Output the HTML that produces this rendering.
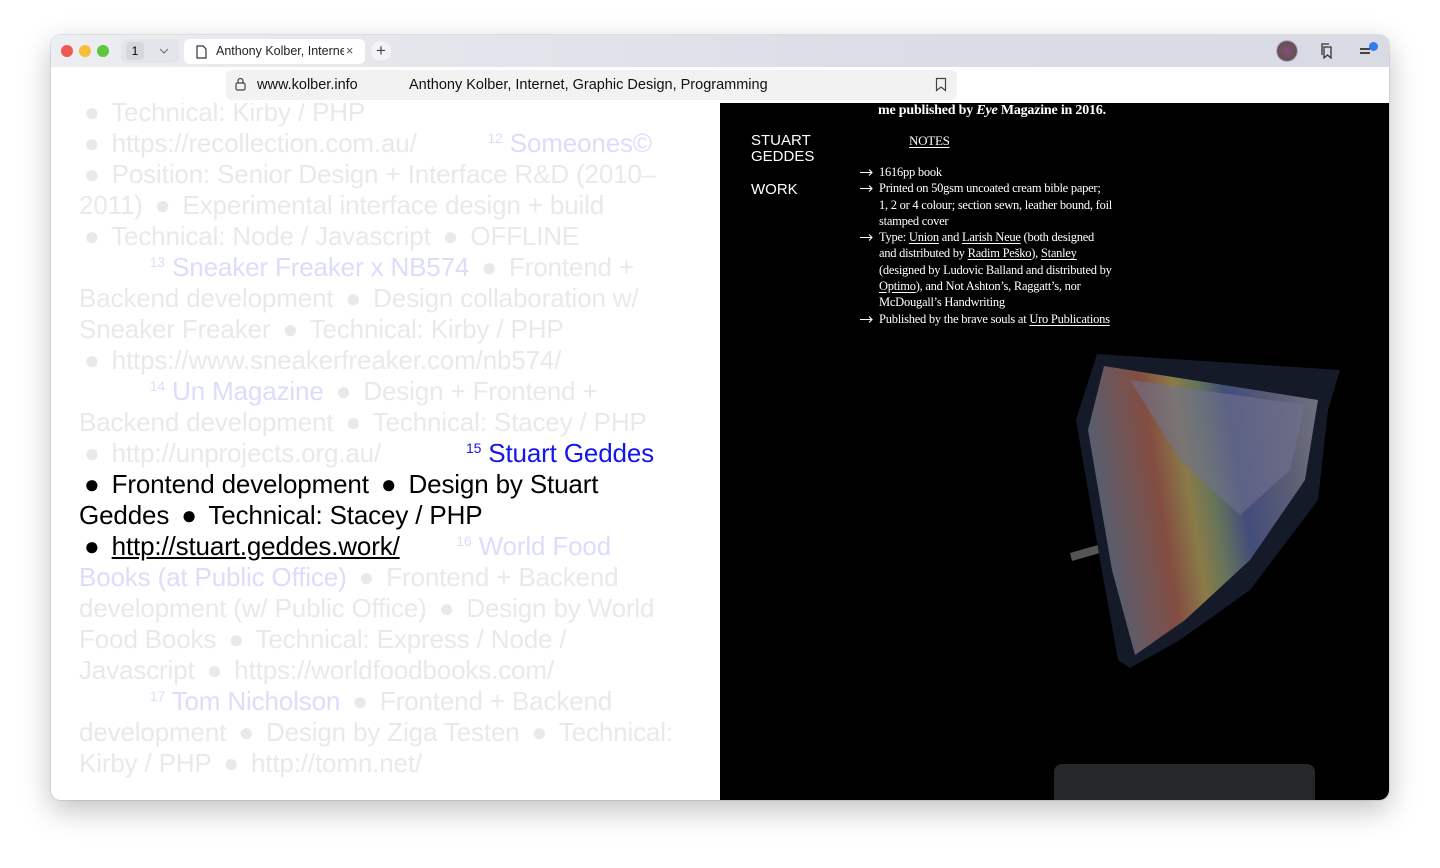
<!DOCTYPE html>
<html><head><meta charset="utf-8"><style>
*{margin:0;padding:0;box-sizing:border-box}
body{width:1440px;height:868px;background:#fff;position:relative;overflow:hidden;font-family:"Liberation Sans",Arial,sans-serif}
.win{position:absolute;left:51px;top:35px;width:1338px;height:765px;border-radius:10px;overflow:hidden;box-shadow:0 10px 30px rgba(0,0,0,.25),0 0 0 1px rgba(0,0,0,.08)}
.tabbar{position:absolute;left:0;top:0;width:100%;height:32px;background:linear-gradient(90deg,#eceef2,#dcdde6 60%,#d8dae4)}
.addr{position:absolute;left:0;top:32px;width:100%;height:36px;background:#fff}
.dot{position:absolute;top:10px;width:12px;height:12px;border-radius:50%}
.content{position:absolute;left:0;top:68px;width:100%;height:697px;overflow:hidden}
.left{position:absolute;left:0;top:0;width:669px;height:697px;background:#fff;overflow:hidden}
.right{position:absolute;left:669px;top:0;width:669px;height:697px;background:#000;overflow:hidden}
.ln{position:absolute;left:28px;font-size:26px;line-height:31px;height:31px;white-space:pre;color:#e9e9e9;letter-spacing:-0.15px}
.d{font-style:normal;margin:0 5px}
.f{margin-left:5px}
.b{color:#dcdcfb}
.k{color:#000}
.bl{color:#1515ee}
sup{font-size:14px;line-height:0;position:relative;top:-9px;vertical-align:baseline}
.serif{font-family:"Liberation Serif",serif;color:#fff;font-size:12.5px;line-height:16.3px;position:absolute;letter-spacing:-0.25px}
.notes{white-space:nowrap}
.serif u{text-decoration:underline;text-underline-offset:2px}
.it{padding-left:19px;position:relative}
.it svg{position:absolute;left:0;top:5px}
.sans{position:absolute;color:#fff;font-size:15px;line-height:16px}
</style></head><body>
<div class="win">
 <div class="tabbar">
  <div class="dot" style="left:10px;background:#ee5a52"></div>
  <div class="dot" style="left:28px;background:#f4bd3a"></div>
  <div class="dot" style="left:46px;background:#5fc73f"></div>
  <div style="position:absolute;left:70px;top:4px;width:58px;height:24px;border-radius:6px;background:#e4e5ea"></div>
  <div style="position:absolute;left:75px;top:7px;width:18px;height:18px;border-radius:4px;background:#d6d7dc;font-size:12px;text-align:center;line-height:18px">1</div>
  <svg style="position:absolute;left:108px;top:13px" width="10" height="6" viewBox="0 0 10 6"><path d="M1 1l4 4 4-4" fill="none" stroke="#777" stroke-width="1.2"/></svg>
  <div style="position:absolute;left:133px;top:4px;width:181px;height:25px;border-radius:6px;background:#fff;font-size:12.5px;line-height:25px;padding-left:32px;color:#222;white-space:nowrap;overflow:hidden">Anthony Kolber, Interne<span style="color:#aaa">t</span><span style="position:absolute;left:160px;top:0;width:21px;background:#fff;color:#555;padding-left:2px">×</span>
   <svg style="position:absolute;left:12px;top:6px" width="11" height="14" viewBox="0 0 11 14"><path d="M1 1h6l3 3v9H1z" fill="none" stroke="#333" stroke-width="1.2"/></svg></div>
  <div style="position:absolute;left:320px;top:6px;width:20px;height:20px;border-radius:50%;background:#f3f3f6;text-align:center;font-size:17px;line-height:19px;color:#444">+</div>
  <div style="position:absolute;left:1226px;top:6px;width:20px;height:20px;border-radius:50%;background:radial-gradient(circle,#8a4a7a,#4a5a3a);box-shadow:0 0 0 1px #c9a0e0"></div>
  <svg style="position:absolute;left:1269px;top:8px" width="14" height="16" viewBox="0 0 14 16"><path d="M4 4h7v11l-3.5-3L4 15z M2 12V1h7" fill="none" stroke="#333" stroke-width="1.3"/></svg>
  <div style="position:absolute;left:1309px;top:13px;width:10px;height:1.5px;background:#444;box-shadow:0 4px 0 #444"></div>
  <div style="position:absolute;left:1318px;top:7px;width:9px;height:9px;border-radius:50%;background:#2f7bf0"></div>
 </div>
 <div class="addr">
  <div style="position:absolute;left:175px;top:3px;width:731px;height:30px;border-radius:6px;background:#f2f2f3"></div>
  <svg style="position:absolute;left:184px;top:10px" width="11" height="14" viewBox="0 0 11 14"><rect x="1" y="6" width="9" height="7" rx="1.5" fill="none" stroke="#444" stroke-width="1.2"/><path d="M3 6V4a2.5 2.5 0 0 1 5 0v2" fill="none" stroke="#444" stroke-width="1.2"/></svg>
  <div style="position:absolute;left:206px;top:10px;font-size:14.5px;color:#111">www.kolber.info</div>
  <div style="position:absolute;left:358px;top:10px;font-size:14.5px;color:#111">Anthony Kolber, Internet, Graphic Design, Programming</div>
  <svg style="position:absolute;left:884px;top:10px" width="12" height="15" viewBox="0 0 12 15"><path d="M1.5 1.5h9v12l-4.5-3.5-4.5 3.5z" fill="none" stroke="#444" stroke-width="1.2"/></svg>
 </div>
 <div class="content">
  <div class="left">
   <div class="ln" style="top:-6px"><i class="d f">●</i> Technical: Kirby / PHP</div>
   <div class="ln" style="top:25px"><i class="d f">●</i> https://recollection.com.au/          <span class="b"><sup>12</sup> Someones©</span></div>
   <div class="ln" style="top:56px"><i class="d f">●</i> Position: Senior Design + Interface R&amp;D (2010–</div>
   <div class="ln" style="top:87px">2011) <i class="d">●</i> Experimental interface design + build</div>
   <div class="ln" style="top:118px"><i class="d f">●</i> Technical: Node / Javascript <i class="d">●</i> OFFLINE</div>
   <div class="ln" style="top:149px">          <span class="b"><sup>13</sup> Sneaker Freaker x NB574</span> <i class="d">●</i> Frontend +</div>
   <div class="ln" style="top:180px">Backend development <i class="d">●</i> Design collaboration w/</div>
   <div class="ln" style="top:211px">Sneaker Freaker <i class="d">●</i> Technical: Kirby / PHP</div>
   <div class="ln" style="top:242px"><i class="d f">●</i> https://www.sneakerfreaker.com/nb574/</div>
   <div class="ln" style="top:273px">          <span class="b"><sup>14</sup> Un Magazine</span> <i class="d">●</i> Design + Frontend +</div>
   <div class="ln" style="top:304px">Backend development <i class="d">●</i> Technical: Stacey / PHP</div>
   <div class="ln" style="top:335px"><i class="d f">●</i> http://unprojects.org.au/            <span class="bl"><sup>15</sup> Stuart Geddes</span></div>
   <div class="ln k" style="top:366px"><i class="d f">●</i> Frontend development <i class="d">●</i> Design by Stuart</div>
   <div class="ln k" style="top:397px">Geddes <i class="d">●</i> Technical: Stacey / PHP</div>
   <div class="ln k" style="top:428px"><i class="d f">●</i> <u>http://stuart.geddes.work/</u>        <span class="b"><sup>16</sup> World Food</span></div>
   <div class="ln" style="top:459px"><span class="b">Books (at Public Office)</span> <i class="d">●</i> Frontend + Backend</div>
   <div class="ln" style="top:490px">development (w/ Public Office) <i class="d">●</i> Design by World</div>
   <div class="ln" style="top:521px">Food Books <i class="d">●</i> Technical: Express / Node /</div>
   <div class="ln" style="top:552px">Javascript <i class="d">●</i> https://worldfoodbooks.com/</div>
   <div class="ln" style="top:583px">          <span class="b"><sup>17</sup> Tom Nicholson</span> <i class="d">●</i> Frontend + Backend</div>
   <div class="ln" style="top:614px">development <i class="d">●</i> Design by Ziga Testen <i class="d">●</i> Technical:</div>
   <div class="ln" style="top:645px">Kirby / PHP <i class="d">●</i> http://tomn.net/</div>
  </div>
  <div class="right">
   <div class="serif" style="left:158px;top:0px;font-size:14px;font-weight:bold;letter-spacing:-0.2px">me published by <i>Eye</i> Magazine in 2016.</div>
   <div class="sans" style="left:31px;top:30px">STUART<br>GEDDES</div>
   <div class="sans" style="left:31px;top:79px">WORK</div>
   <div class="serif" style="left:189px;top:30px;font-size:13px"><u>NOTES</u></div>
   <div class="serif notes" style="left:140px;top:61px">
    <div class="it"><svg width="13" height="7" viewBox="0 0 13 7"><path d="M0 3.5h12M9 0.5l3 3-3 3" fill="none" stroke="#fff" stroke-width="1.1"/></svg>1616pp book</div>
    <div class="it"><svg width="13" height="7" viewBox="0 0 13 7"><path d="M0 3.5h12M9 0.5l3 3-3 3" fill="none" stroke="#fff" stroke-width="1.1"/></svg>Printed on 50gsm uncoated cream bible paper;<br>1, 2 or 4 colour; section sewn, leather bound, foil<br>stamped cover</div>
    <div class="it"><svg width="13" height="7" viewBox="0 0 13 7"><path d="M0 3.5h12M9 0.5l3 3-3 3" fill="none" stroke="#fff" stroke-width="1.1"/></svg>Type: <u>Union</u> and <u>Larish Neue</u> (both designed<br>and distributed by <u>Radim Peško</u>), <u>Stanley</u><br>(designed by Ludovic Balland and distributed by<br><u>Optimo</u>), and Not Ashton’s, Raggatt’s, nor<br>McDougall’s Handwriting</div>
    <div class="it"><svg width="13" height="7" viewBox="0 0 13 7"><path d="M0 3.5h12M9 0.5l3 3-3 3" fill="none" stroke="#fff" stroke-width="1.1"/></svg>Published by the brave souls at <u>Uro Publications</u></div>
   </div>
   <svg style="position:absolute;left:0;top:0" width="669" height="697" viewBox="720 103 669 697">
    <defs>
     <linearGradient id="g" x1="0" y1="0.2" x2="1" y2="0">
      <stop offset="0" stop-color="#6a6e80"/><stop offset="0.25" stop-color="#a05a48"/><stop offset="0.38" stop-color="#a89450"/><stop offset="0.48" stop-color="#7a8a68"/><stop offset="0.6" stop-color="#4e5a90"/><stop offset="0.8" stop-color="#6e6e88"/><stop offset="1" stop-color="#8a8a96"/>
     </linearGradient>
    </defs>
    <path d="M1070 553l28-8 2 8-28 8z" fill="#555"/>
    <path d="M1076 420L1097 354L1340 370L1328 410L1318 500L1250 590L1180 640L1130 668L1118 660L1100 560Z" fill="#141a28"/>
    <path d="M1088 430L1104 366L1318 400L1305 480L1250 560L1185 620L1135 655L1112 570Z" fill="url(#g)" opacity="0.8"/>
    <path d="M1130 380L1305 405L1290 470L1240 515L1180 460Z" fill="#707290" opacity="0.6"/>
    <rect x="1054" y="764" width="261" height="50" rx="8" fill="#262728"/>
   </svg>
  </div>
 </div>
</div>
</body></html>
